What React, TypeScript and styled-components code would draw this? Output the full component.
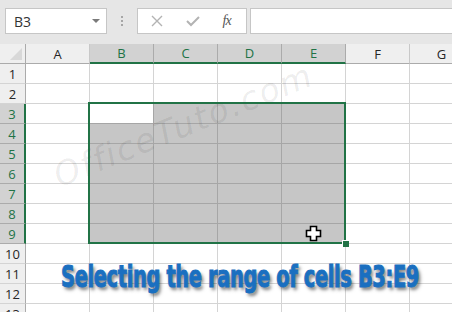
import React from 'react';
import styled, { createGlobalStyle } from 'styled-components';

const GlobalStyle = createGlobalStyle`
  html, body {
    margin: 0;
    padding: 0;
    background: #ffffff;
    overflow: hidden;
    font-family: "Open Sans", "Liberation Sans", sans-serif;
  }
`;

const COLS = ['A', 'B', 'C', 'D', 'E', 'F', 'G'];
const ROWS = 13;
const SEL_COLS = ['B', 'C', 'D', 'E'];
const isSelRow = (r: number) => r >= 3 && r <= 9;

// Toolbar
const Toolbar = styled.div`
  display: flex;
  height: 44px;
  box-sizing: border-box;
  padding: 8px 0 10px 5px;
  background: #e6e6e6;
`;

const NameBox = styled.div`
  width: 102px;
  box-sizing: border-box;
  border: 1px solid #c6c6c6;
  background: #fff;
  display: flex;
  align-items: center;
  justify-content: space-between;
  padding: 0 6px 0 8px;
  font-size: 14px;
  color: #333;
`;

const Arrow = styled.span`
  width: 0;
  height: 0;
  border-left: 4px solid transparent;
  border-right: 4px solid transparent;
  border-top: 4px solid #7a7a7a;
`;

const Dots = styled.div`
  width: 30px;
  display: flex;
  flex-direction: column;
  align-items: center;
  justify-content: center;
  gap: 2px;
  span {
    width: 2px;
    height: 2px;
    background: #a6a6a6;
  }
`;

const FxBox = styled.div`
  width: 110px;
  box-sizing: border-box;
  border: 1px solid #c6c6c6;
  background: #fff;
  display: flex;
  align-items: center;
  justify-content: space-around;
  padding: 0 4px 0 2px;
`;

const FxLabel = styled.span`
  font-family: "Liberation Serif", serif;
  font-style: italic;
  font-size: 14px;
  color: #555;
  letter-spacing: -1px;
`;

const FormulaInput = styled.div`
  flex: 1;
  margin-left: 3px;
  border: 1px solid #c6c6c6;
  border-right: none;
  background: #fff;
`;

// Grid
const Sheet = styled.div`
  position: relative;
  overflow: hidden;
  height: 268px;
`;

const Grid = styled.div`
  display: grid;
  grid-template-columns: 26px repeat(7, 64px);
  grid-auto-rows: 20px;
  width: 474px;
  font-size: 13px;
`;

const Corner = styled.div`
  position: relative;
  background: #efefef;
  border-right: 1px solid #ababab;
  border-bottom: 1px solid #ababab;
  &::after {
    content: '';
    position: absolute;
    right: 3px;
    bottom: 3px;
    border-left: 12px solid transparent;
    border-bottom: 12px solid #d8d8d8;
  }
`;

const ColHead = styled.div<{ $sel?: boolean }>`
  display: flex;
  align-items: center;
  justify-content: center;
  box-sizing: border-box;
  background: ${p => (p.$sel ? '#d2d2d2' : '#efefef')};
  color: ${p => (p.$sel ? '#217346' : '#262626')};
  border-right: 1px solid ${p => (p.$sel ? '#ababab' : '#c8c8c8')};
  border-bottom: ${p => (p.$sel ? '2px solid #217346' : '1px solid #ababab')};
`;

const RowHead = styled.div<{ $sel?: boolean }>`
  display: flex;
  align-items: center;
  justify-content: center;
  box-sizing: border-box;
  background: ${p => (p.$sel ? '#d2d2d2' : '#efefef')};
  color: ${p => (p.$sel ? '#217346' : '#262626')};
  border-right: ${p => (p.$sel ? '2px solid #217346' : '1px solid #ababab')};
  border-bottom: 1px solid ${p => (p.$sel ? '#ababab' : '#d4d4d4')};
`;

const Cell = styled.div<{ $sel?: boolean; $active?: boolean }>`
  box-sizing: border-box;
  background: ${p => (p.$sel && !p.$active ? '#c6c6c6' : '#ffffff')};
  border-right: 1px solid ${p => (p.$sel ? '#a6a6a6' : '#d4d4d4')};
  border-bottom: 1px solid ${p => (p.$sel ? '#a6a6a6' : '#d4d4d4')};
`;

// Overlays
const Selection = styled.div`
  position: absolute;
  left: 88px;
  top: 58px;
  width: 258px;
  height: 142px;
  box-sizing: border-box;
  border: 2px solid #217346;
  pointer-events: none;
`;

const FillHandle = styled.div`
  position: absolute;
  right: -5px;
  bottom: -5px;
  width: 6px;
  height: 6px;
  background: #217346;
  border-left: 1px solid #fff;
  border-top: 1px solid #fff;
`;

const Watermark = styled.div`
  position: absolute;
  left: 62px;
  top: 114px;
  font-family: "DejaVu Sans", sans-serif;
  font-style: italic;
  font-size: 33px;
  line-height: 36px;
  color: rgba(0, 0, 0, 0.08);
  white-space: nowrap;
  transform: rotate(-22deg);
  transform-origin: left bottom;
  letter-spacing: 2px;
`;

const Caption = styled.div`
  position: absolute;
  left: 61px;
  top: 216px;
  font-family: "DejaVu Sans Condensed", "DejaVu Sans", sans-serif;
  font-weight: bold;
  font-size: 30px;
  line-height: 34px;
  color: #1a6fc0;
  white-space: nowrap;
  letter-spacing: -0.5px;
  transform: scaleX(0.72);
  transform-origin: left center;
  text-shadow: 3px 3px 4px rgba(0, 0, 0, 0.5);
  -webkit-text-stroke: 1px #1a6fc0;
`;

const Cursor = styled.svg`
  position: absolute;
  left: 305px;
  top: 181px;
`;

const App: React.FC = () => {
  const rows = Array.from({ length: ROWS }, (_, i) => i + 1);
  return (
    <>
      <GlobalStyle />
      <Toolbar>
        <NameBox>
          B3
          <Arrow />
        </NameBox>
        <Dots>
          <span />
          <span />
          <span />
        </Dots>
        <FxBox>
          <svg width="12" height="12" viewBox="0 0 12 12">
            <path d="M1 1 L11 11 M11 1 L1 11" stroke="#b3b3b3" strokeWidth="1.4" fill="none" />
          </svg>
          <svg width="14" height="12" viewBox="0 0 14 12">
            <path d="M1 6 L5 10 L13 2" stroke="#b3b3b3" strokeWidth="2" fill="none" />
          </svg>
          <FxLabel>fx</FxLabel>
        </FxBox>
        <FormulaInput />
      </Toolbar>
      <Sheet>
        <Grid>
          <Corner />
          {COLS.map(c => (
            <ColHead key={c} $sel={SEL_COLS.includes(c)}>
              {c}
            </ColHead>
          ))}
          {rows.map(r => (
            <React.Fragment key={r}>
              <RowHead $sel={isSelRow(r)}>{r}</RowHead>
              {COLS.map(c => {
                const sel = isSelRow(r) && SEL_COLS.includes(c);
                return <Cell key={c} $sel={sel} $active={sel && c === 'B' && r === 3} />;
              })}
            </React.Fragment>
          ))}
        </Grid>
        <Watermark>OfficeTuto.com</Watermark>
        <Selection>
          <FillHandle />
        </Selection>
        <Cursor width="17" height="17" viewBox="0 0 17 17">
          <path
            d="M5.5 1.5 H11.5 V5.5 H15.5 V11.5 H11.5 V15.5 H5.5 V11.5 H1.5 V5.5 H5.5 Z"
            fill="#fff"
            stroke="#000"
            strokeWidth="1.6"
          />
        </Cursor>
        <Caption>Selecting the range of cells B3:E9</Caption>
      </Sheet>
    </>
  );
};

export default App;
